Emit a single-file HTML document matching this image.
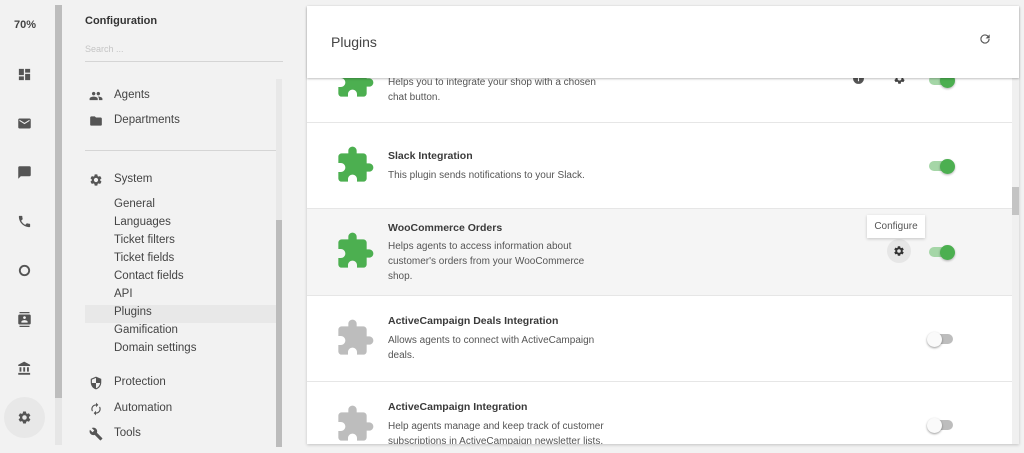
<!DOCTYPE html>
<html><head><meta charset="utf-8"><style>
*{margin:0;padding:0;box-sizing:border-box}
body{width:1024px;height:453px;overflow:hidden;background:#f2f2f2;font-family:"Liberation Sans",sans-serif;color:#424242;position:relative}
.a{position:absolute}
.rail svg{position:absolute;left:17px;width:15px;height:15px;fill:#555}
.item{position:absolute;left:114px;font-size:11.5px;color:#444}
.row{position:absolute;left:307px;width:705px;border-bottom:1px solid #e6e6e6;background:#fff;overflow:hidden}
.row .pz{position:absolute;left:28px;width:40px;height:40px}
.t{position:absolute;left:81px;font-size:10.5px;font-weight:bold;color:#3a3a3a}
.d{position:absolute;left:81px;font-size:10px;line-height:15px;color:#555;width:218px}
.tg{position:absolute;left:622px;width:24px;height:10px;border-radius:5px}
.tg i{position:absolute;top:-2.5px;width:15px;height:15px;border-radius:50%}
.on{background:#a5d6a7}.on i{left:11px;background:#4caf50;box-shadow:0 1px 2px rgba(0,0,0,.3)}
.off{background:#bdbdbd}.off i{left:-2px;background:#fafafa;box-shadow:0 1px 2px rgba(0,0,0,.4)}
</style></head><body>
<svg width="0" height="0" style="position:absolute"><defs><path id="pz" d="M20.5 11H19V7c0-1.1-.9-2-2-2h-4V3.5C13 2.12 11.88 1 10.5 1S8 2.12 8 3.5V5H4c-1.1 0-1.99.9-1.99 2v3.8H3.5c1.49 0 2.7 1.21 2.7 2.7s-1.21 2.7-2.7 2.7H2V20c0 1.1.9 2 2 2h3.8v-1.5c0-1.490 1.21-2.7 2.7-2.7 1.49 0 2.7 1.21 2.7 2.7V22H17c1.1 0 2-.9 2-2v-4h1.5c1.38 0 2.5-1.12 2.5-2.5S21.880 11 20.5 11z"/><path id="gear" d="M19.14 12.94c.04-.3.06-.61.06-.94 0-.32-.02-.64-.07-.94l2.03-1.58a.49.49 0 00.12-.61l-1.92-3.32a.49.49 0 00-.59-.22l-2.39.96c-.5-.38-1.03-.7-1.62-.94l-.36-2.54a.48.48 0 00-.48-.41h-3.840c-.24 0-.43.17-.47.41l-.36 2.54c-.59.24-1.13.57-1.62.94l-2.39-.96a.48.48 0 00-.59.22L2.74 8.87c-.12.21-.08.47.12.61l2.03 1.58c-.05.3-.09.63-.09.94s.02.64.07.94l-2.03 1.58a.49.49 0 00-.12.61l1.92 3.32c.12.22.37.29.59.22l2.39-.96c.5.38 1.03.7 1.62.94l.36 2.54c.05.24.24.41.48.41h3.84c.24 0 .44-.17.47-.41l.36-2.54c.59-.24 1.13-.56 1.62-.94l2.39.96c.22.08.47 0 .59-.22l1.92-3.32c.12-.22.07-.47-.12-.61l-2.01-1.58zM12 15.6A3.6 3.6 0 1112 8.4a3.6 3.6 0 010 7.2z"/></defs></svg>

<div class="rail">
<div class="a" style="left:14px;top:19px;font-size:11px;font-weight:bold;color:#444">70%</div>
<svg viewBox="0 0 24 24" style="top:67px"><path d="M3 13h8V3H3v10zm0 8h8v-6H3v6zm10 0h8V11h-8v10zm0-18v6h8V3h-8z"/></svg>
<svg viewBox="0 0 24 24" style="top:116px"><path d="M20 4H4c-1.1 0-2 .9-2 2v12c0 1.1.9 2 2 2h16c1.1 0 2-.9 2-2V6c0-1.1-.9-2-2-2zm0 4l-8 5-8-5V6l8 5 8-5v2z"/></svg>
<svg viewBox="0 0 24 24" style="top:165px"><path d="M20 2H4c-1.1 0-2 .9-2 2v18l4-4h14c1.1 0 2-.9 2-2V4c0-1.1-.9-2-2-2z"/></svg>
<svg viewBox="0 0 24 24" style="top:214px"><path d="M6.62 10.79c1.44 2.83 3.76 5.14 6.59 6.59l2.2-2.2c.27-.27.67-.36 1.02-.24 1.12.37 2.33.57 3.57.57.55 0 1 .45 1 1V20c0 .55-.45 1-1 1C10.61 21 3 13.39 3 4c0-.55.45-1 1-1h3.5c.55 0 1 .45 1 1 0 1.25.2 2.45.57 3.57.11.35.03.74-.25 1.02l-2.2 2.2z"/></svg>
<svg viewBox="0 0 24 24" style="top:263px"><path d="M12 3a9 9 0 100 18 9 9 0 000-18zm0 3a6 6 0 110 12 6 6 0 010-12z"/></svg>
<svg viewBox="0 0 24 24" style="top:312px"><path d="M20 0H4v2h16V0zM4 24h16v-2H4v2zM20 4H4c-1.1 0-2 .9-2 2v12c0 1.1.9 2 2 2h16c1.1 0 2-.9 2-2V6c0-1.1-.9-2-2-2zm-8 2.75c1.24 0 2.25 1.01 2.25 2.25s-1.01 2.25-2.25 2.25S9.75 10.24 9.75 9 10.76 6.75 12 6.75zM17 17H7v-1.5c0-1.67 3.33-2.5 5-2.5s5 .83 5 2.5V17z"/></svg>
<svg viewBox="0 0 24 24" style="top:361px"><path d="M4 10v7h3v-7H4zm6 0v7h3v-7h-3zM2 22h19v-3H2v3zm14-12v7h3v-7h-3zm-4.5-9L2 6v2h19V6l-9.5-5z"/></svg>
<div class="a" style="left:4px;top:397px;width:41px;height:41px;border-radius:50%;background:#e8e8e8"></div>
<svg viewBox="0 0 24 24" style="top:410px"><use href="#gear"/></svg>
</div>
<div class="a" style="left:55px;top:5px;width:7px;height:440px;background:#e6e6e6"></div>
<div class="a" style="left:55px;top:5px;width:7px;height:393px;background:#bdbdbd"></div>

<div class="a" style="left:85px;top:15px;font-size:11px;font-weight:bold;color:#333">Configuration</div>
<div class="a" style="left:85px;top:44px;font-size:9px;color:#c5c5c5">Search ...</div>
<div class="a" style="left:85px;top:61px;width:198px;height:1px;background:#d5d5d5"></div>
<div class="a" style="left:85px;top:150px;width:191px;height:1px;background:#d5d5d5"></div>
<div class="a" style="left:276px;top:79px;width:6px;height:368px;background:#e8e8e8"></div>
<div class="a" style="left:276px;top:220px;width:6px;height:227px;background:#bcbcbc"></div>
<div class="a" style="left:85px;top:305px;width:191px;height:18px;background:#e8e8e8"></div>
<svg class="a" viewBox="0 0 24 24" style="left:89px;top:89px;width:14px;height:14px;fill:#555"><path d="M16 11c1.66 0 2.99-1.34 2.99-3S17.66 5 16 5c-1.66 0-3 1.34-3 3s1.34 3 3 3zm-8 0c1.66 0 2.99-1.34 2.99-3S9.66 5 8 5C6.34 5 5 6.34 5 8s1.34 3 3 3zm0 2c-2.33 0-7 1.17-7 3.5V19h14v-2.5c0-2.33-4.67-3.5-7-3.5zm8 0c-.29 0-.62.02-.97.05 1.16.84 1.970 1.97 1.97 3.45V19h6v-2.5c0-2.33-4.67-3.5-7-3.5z"/></svg>
<svg class="a" viewBox="0 0 24 24" style="left:89px;top:114px;width:14px;height:14px;fill:#555"><path d="M10 4H4c-1.1 0-2 .9-2 2v12c0 1.1.9 2 2 2h16c1.1 0 2-.9 2-2V8c0-1.1-.9-2-2-2h-8l-2-2z"/></svg>
<svg class="a" viewBox="0 0 24 24" style="left:89px;top:173px;width:14px;height:14px;fill:#555"><use href="#gear"/></svg>
<svg class="a" viewBox="0 0 24 24" style="left:89px;top:376px;width:14px;height:14px;fill:#555"><path d="M12 1L3 5v6c0 5.55 3.84 10.74 9 12 5.16-1.26 9-6.45 9-12V5l-9-4zm0 10.99h7c-.53 4.12-3.28 7.79-7 8.94V12H5V6.3l7-3.11v8.8z"/></svg>
<svg class="a" viewBox="0 0 24 24" style="left:89px;top:402px;width:14px;height:14px;fill:#555"><path d="M12 6v3l4-4-4-4v3c-4.42 0-8 3.58-8 8 0 1.57.46 3.03 1.24 4.26L6.7 14.8A5.87 5.87 0 016 12c0-3.31 2.69-6 6-6zm6.76 1.74L17.3 9.2c.44.84.7 1.79.7 2.8 0 3.31-2.69 6-6 6v-3l-4 4 4 4v-3c4.42 0 8-3.58 8-8 0-1.57-.46-3.03-1.24-4.26z"/></svg>
<svg class="a" viewBox="0 0 24 24" style="left:89px;top:427px;width:14px;height:14px;fill:#555"><path d="M22.7 19l-9.1-9.1c.9-2.3.4-5-1.5-6.9-2-2-5-2.4-7.4-1.3L9 6 6 9 1.6 4.7C.4 7.1.9 10.1 2.9 12.1c1.9 1.9 4.6 2.4 6.9 1.5l9.1 9.1c.4.4 1 .4 1.4 0l2.3-2.3c.5-.4.5-1.1.1-1.4z"/></svg>
<div class="item" style="top:89px">Agents</div>
<div class="item" style="top:114px">Departments</div>
<div class="item" style="top:173px">System</div>
<div class="item" style="top:198px">General</div>
<div class="item" style="top:216px">Languages</div>
<div class="item" style="top:234px">Ticket filters</div>
<div class="item" style="top:252px">Ticket fields</div>
<div class="item" style="top:270px">Contact fields</div>
<div class="item" style="top:288px">API</div>
<div class="item" style="top:306px">Plugins</div>
<div class="item" style="top:324px">Gamification</div>
<div class="item" style="top:342px">Domain settings</div>
<div class="item" style="top:376px">Protection</div>
<div class="item" style="top:402px">Automation</div>
<div class="item" style="top:427px">Tools</div>

<div class="a" style="left:307px;top:6px;width:712px;height:438px;background:#fff;box-shadow:0 1px 3px rgba(0,0,0,.2)"></div>
<div class="a" style="left:1012px;top:78px;width:7px;height:366px;background:#f0f0f0"></div>
<div class="a" style="left:1012px;top:187px;width:7px;height:28px;background:#c4c4c4"></div>

<div class="row" style="top:60px;height:63px">
<svg class="pz" viewBox="0 0 24 24" style="top:0;fill:#4caf50"><use href="#pz"/></svg>
<div class="d" style="top:15px">Helps you to integrate your shop with a chosen chat button.</div>
<svg class="a" viewBox="0 0 24 24" style="left:545px;top:12px;width:13px;height:13px;fill:#555"><circle cx="12" cy="12" r="10"/><rect x="11" y="10" width="2" height="7" fill="#fff"/><rect x="11" y="7" width="2" height="2" fill="#fff"/></svg>
<svg class="a" viewBox="0 0 24 24" style="left:586px;top:12px;width:13px;height:13px;fill:#444"><use href="#gear"/></svg>
<div class="tg on" style="top:15px"><i></i></div>
</div>
<div class="row" style="top:123px;height:86px">
<svg class="pz" viewBox="0 0 24 24" style="top:22px;fill:#4caf50"><use href="#pz"/></svg>
<div class="t" style="top:27px">Slack Integration</div>
<div class="d" style="top:45px">This plugin sends notifications to your Slack.</div>
<div class="tg on" style="top:38px"><i></i></div>
</div>
<div class="row" style="top:209px;height:87px;background:#f5f5f5">
<svg class="pz" viewBox="0 0 24 24" style="top:22px;fill:#4caf50"><use href="#pz"/></svg>
<div class="t" style="top:13px">WooCommerce Orders</div>
<div class="d" style="top:30px">Helps agents to access information about customer's orders from your WooCommerce shop.</div>
<div class="a" style="left:580px;top:30px;width:24px;height:24px;border-radius:50%;background:#e6e6e6"></div>
<svg class="a" viewBox="0 0 24 24" style="left:586px;top:36px;width:12px;height:12px;fill:#333"><use href="#gear"/></svg>
<div class="tg on" style="top:38px"><i></i></div>
</div>
<div class="a" style="left:867px;top:215px;width:58px;height:23px;background:#fff;box-shadow:0 1px 3px rgba(0,0,0,.2);font-size:10px;color:#555;text-align:center;line-height:23px">Configure</div>
<div class="row" style="top:296px;height:86px">
<svg class="pz" viewBox="0 0 24 24" style="top:22px;fill:#bdbdbd"><use href="#pz"/></svg>
<div class="t" style="top:19px">ActiveCampaign Deals Integration</div>
<div class="d" style="top:37px">Allows agents to connect with ActiveCampaign deals.</div>
<div class="tg off" style="top:38px"><i></i></div>
</div>
<div class="row" style="top:382px;height:62px;border:none">
<svg class="pz" viewBox="0 0 24 24" style="top:22px;fill:#bdbdbd"><use href="#pz"/></svg>
<div class="t" style="top:19px">ActiveCampaign Integration</div>
<div class="d" style="top:37px;width:240px">Help agents manage and keep track of customer subscriptions in ActiveCampaign newsletter lists.</div>
<div class="tg off" style="top:38px"><i></i></div>
</div>

<div class="a" style="left:307px;top:6px;width:712px;height:72px;background:#fff;box-shadow:0 1px 2px rgba(0,0,0,.25)">
<div class="a" style="left:24px;top:28px;font-size:14px;color:#444">Plugins</div>
<svg class="a" viewBox="0 0 24 24" style="left:671px;top:26px;width:14px;height:14px;fill:#555"><path d="M17.65 6.35A7.958 7.958 0 0012 4a8 8 0 108 8h-2a6 6 0 11-1.78-4.220L13 11h7V4l-2.35 2.35z"/></svg>
</div>
</body></html>
